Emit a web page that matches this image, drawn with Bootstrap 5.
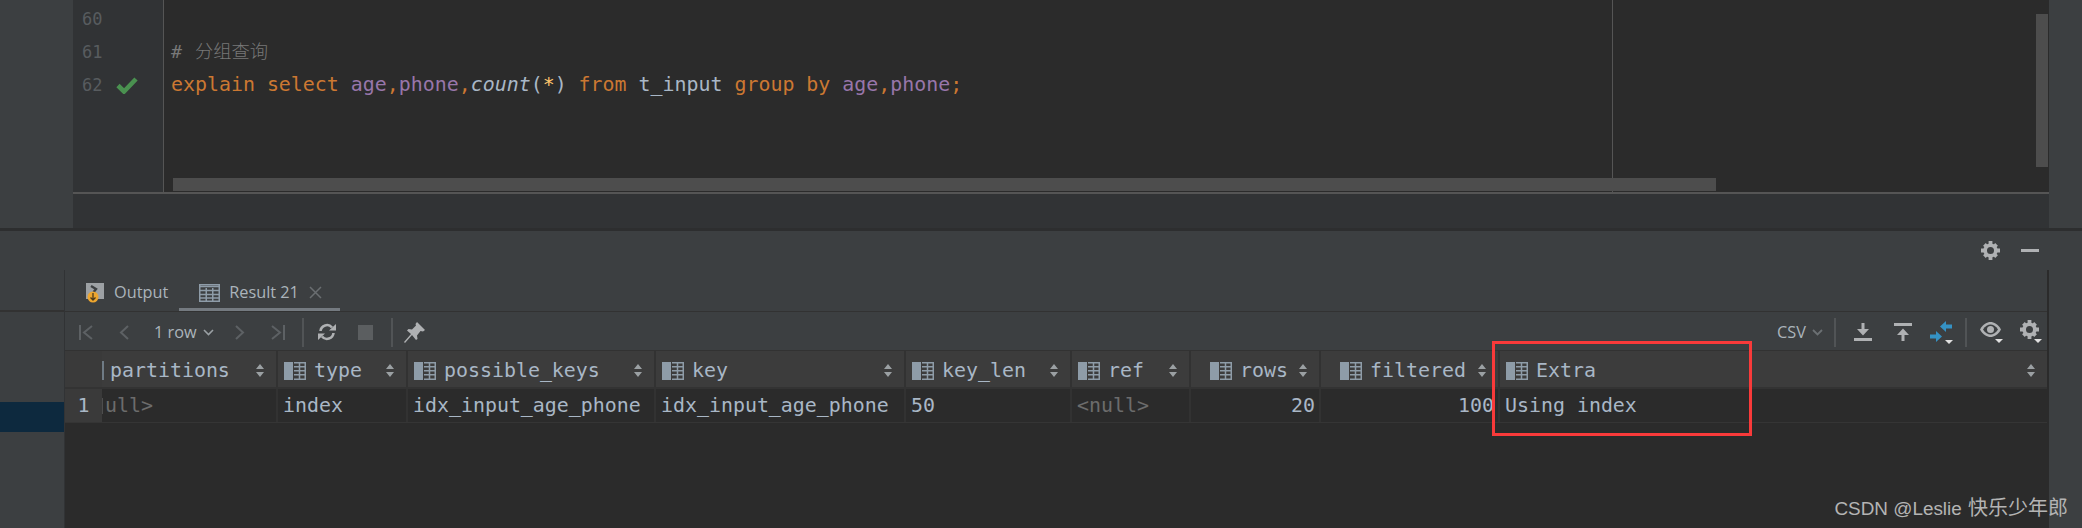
<!DOCTYPE html>
<html lang="en">
<head>
<meta charset="utf-8">
<title>Explain result</title>
<link href="https://cdn.jsdelivr.net/npm/bootstrap@5.3.0/dist/css/bootstrap.min.css" rel="stylesheet">
<style>
html,body{margin:0;height:528px;overflow:hidden}
body{position:relative;width:2082px;background:#3c3f41;color:#a9b7c6;font-family:"DejaVu Sans Mono","Liberation Mono",monospace}
.mono{font-family:"DejaVu Sans Mono","Liberation Mono",monospace;font-size:19.92px;letter-spacing:0}
.ui{font-family:"Open Sans","Liberation Sans",sans-serif;font-size:16.3px;color:#abb4bb}
.top-area{height:228px}
.stripe-l{width:73px;background:#3c3f41}
.stripe-r{width:33px;background:#3c3f41}
.editor-col{width:1976px}
.editor{height:192px;background:#2b2b2b;position:relative;overflow:hidden}
.gutter{width:91px;background:#313335;border-right:1px solid #555;padding-top:3px}
.g-line{height:33px;line-height:33px;padding-left:9px;font-size:17px;color:#585c5f}
.g-line svg{margin-left:14px}
.code{padding-top:2px;padding-left:7px}
.c-line{height:33px;line-height:33px;white-space:pre}
.kw{color:#cc7832}.col{color:#9876aa}.fn{color:#a9b7c6;font-style:italic}.star{color:#ffc66d}
.cmt{color:#787878;font-family:"DejaVu Sans Mono","Noto Sans CJK SC",monospace;font-size:18.3px;font-weight:300;word-spacing:2px}
.margin-line{position:absolute;left:1539px;top:0;bottom:0;width:1px;background:#555}
.sb-h{position:absolute;left:100px;top:178px;width:1543px;height:13px;background:#4d4d4d}
.sb-v{position:absolute;right:1px;top:14px;width:12px;height:153px;background:#4d4d4d}
.crumbs{height:36px;border-top:2px solid #555;background:#313335}
.split{height:3px;background:#2d2e2f}
.lower{height:297px}
.tw-head{height:39px;padding-right:43px}
.tw-head .gear-i{margin-right:21px}
.tw-body{height:258px}
.side{width:64px}
.side-a{height:42px;border-bottom:2px solid #323232}
.side-b{height:90px}
.side-sel{height:30px;background:#0d293e}
.panel{width:1985px;border-left:1px solid #313335;border-right:2px solid #2b2b2b;background:#2b2b2b}
.tabs{height:42px;background:#3c3f41;border-bottom:1px solid #323232;padding-left:21px}
.tab{height:41px;padding-top:4px}
.tab-a{position:relative}
.tab-a::after{content:"";position:absolute;left:-20px;right:-18px;bottom:0;height:3px;background:#747a80}
.lbl{margin-left:9px}
.tab-res{margin-left:31px}
.x-i{margin-left:10px}
.toolbar{height:38px;background:#3c3f41;padding:2px 4px 0 14px}
.sep{width:2px;height:29px;background:#515456}
.m6{margin-left:6px}.m11{margin-left:11px}.m12{margin-left:12px}.m13{margin-left:13px}.m14{margin-left:14px}.m16{margin-left:16px}.m17{margin-left:17px}.m18{margin-left:18px}.m21{margin-left:21px}.m22{margin-left:22px}.m26{margin-left:26px}
.lb-row{margin-left:25px}
.gridrow{display:grid;grid-template-columns:37px 176px 130px 248px 250px 166px 119px 130px 179px 1fr}
.ghead{height:39px;background:#3c3c3c;border-top:1px solid #323232;border-bottom:2px solid #333}
.ghead>div{border-right:2px solid #323232;height:36px;padding-left:6px;padding-top:3px;overflow:hidden}
.ghead>div:first-child{padding-left:0;border-right:0;background:#3a3a3a}
.ghead>div:last-child{border-right:0}
.ghead .cut{padding-left:0}
.cut-i{width:2px;height:19px;background:#6f7b85;margin-right:6px}
.ghead .rt{padding-left:19px}
.hname{margin-left:8px;line-height:33px}
.cut .hname{margin-left:0}
.srt{margin-left:auto;margin-right:12px;flex:none}
.gbody{height:34px;border-bottom:1px solid #353535;background:#2b2b2b}
.gbody>div{border-right:2px solid #323232;height:33px;line-height:33px;padding:0 5px;overflow:hidden;white-space:nowrap}
.gbody>div:first-child{background:#3a3a3a;border-right:0;text-align:center;padding:0}
.gbody>div:last-child{border-right:0}
.nul{color:#6c6c6c}
.gbody>.clipc{position:relative;padding-left:3px}
.gbody>.clipc::before{content:"";position:absolute;left:0;top:9px;width:1px;height:16px;background:#4d4d4d}
.rgt{text-align:right}
.gbody>.rgt{padding-right:4px}
.redbox{position:absolute;left:1492px;top:341px;width:260px;height:95px;border:3px solid #f93a3a}
.wm{position:absolute;right:14px;top:496px;font-family:"Liberation Sans","Noto Sans CJK SC",sans-serif;font-size:18.9px;line-height:24px;color:#b4b4b4;white-space:nowrap}
.wm-cjk{font-size:20px;margin-left:1px}
</style>
</head>
<body>
<svg width="0" height="0" class="d-block">
  <defs>
    <symbol id="colic" viewBox="0 0 22 18">
      <rect x="0" y="0" width="9" height="18" fill="#8e9ca8"/>
      <path d="M10 .75H22M10 4.75H22M10 8.75H22M10 12.75H22M10 17.25H22M15.5 0V18M21.25 0V18" stroke="#8e9ca8" stroke-width="1.5" fill="none"/>
    </symbol>
    <symbol id="sorti" viewBox="0 0 8 13">
      <path d="M4 0L8 5H0ZM4 13L0 8H8Z" fill="#9ba0a3"/>
    </symbol>
    <symbol id="geari" viewBox="0 0 20 20">
      <circle cx="10" cy="10" r="5.6" fill="none" stroke="#afb1b3" stroke-width="3.8"/>
      <path d="M8 0h4v4H8zM8 16h4v4H8zM0 8h4v4H0zM16 8h4v4h-4zM2.2 5l2.8-2.8 2.8 2.8L5 7.8zM12.2 15l2.8-2.8 2.8 2.8L15 17.8zM2.2 15L5 12.2 7.8 15 5 17.8zM12.2 5L15 2.2 17.800 5 15 7.8z" fill="#afb1b3"/>
    </symbol>
  </defs>
</svg>

<div class="top-area d-flex">
  <div class="stripe-l"></div>
  <div class="editor-col">
    <div class="editor d-flex mono">
      <div class="gutter flex-shrink-0">
        <div class="g-line">60</div>
        <div class="g-line">61</div>
        <div class="g-line d-flex align-items-center">62<svg width="22" height="17" viewBox="0 0 22 17"><path d="M2 8.500L8 14.500L20 2" fill="none" stroke="#4a9150" stroke-width="4.6"/></svg></div>
      </div>
      <div class="code flex-grow-1">
        <div class="c-line">&nbsp;</div>
        <div class="c-line"><span class="cmt"># 分组查询</span></div>
        <div class="c-line"><span class="kw">explain select </span><span class="col">age</span><span class="kw">,</span><span class="col">phone</span><span class="kw">,</span><span class="fn">count</span>(<span class="star">*</span>) <span class="kw">from </span>t_input <span class="kw">group by </span><span class="col">age</span><span class="kw">,</span><span class="col">phone</span><span class="kw">;</span></div>
      </div>
      <div class="margin-line"></div>
      <div class="sb-h"></div>
      <div class="sb-v"></div>
    </div>
    <div class="crumbs"></div>
  </div>
  <div class="stripe-r"></div>
</div>
<div class="split"></div>

<div class="lower d-flex flex-column">
  <div class="tw-head d-flex align-items-center justify-content-end">
    <svg class="gear-i" width="19" height="19"><use href="#geari"/></svg>
    <svg width="18" height="3"><rect width="18" height="3" fill="#afb1b3"/></svg>
  </div>
  <div class="tw-body d-flex">
    <div class="side flex-shrink-0">
      <div class="side-a"></div>
      <div class="side-b"></div>
      <div class="side-sel"></div>
    </div>
    <div class="panel d-flex flex-column">
      <div class="tabs d-flex align-items-center ui">
        <div class="tab d-flex align-items-center">
          <svg width="19" height="21" viewBox="0 0 19 21">
            <rect x="0" y="1" width="18" height="16" fill="#9da1a4"/>
            <path d="M5 4l5 3-2 2.500M8 9v5" fill="none" stroke="#3c3f41" stroke-width="2.400"/>
            <circle cx="7" cy="15" r="5.500" fill="#eda62f"/>
            <path d="M7 11v7M4.500 15.500L7 18l2.500-2.500" fill="none" stroke="#4a3a1c" stroke-width="1.300"/>
          </svg>
          <span class="lbl">Output</span>
        </div>
        <div class="tab tab-a tab-res d-flex align-items-center">
          <svg width="21" height="18" viewBox="0 0 21 18">
            <rect x=".75" y=".75" width="19.500" height="16.500" fill="none" stroke="#8e9ca8" stroke-width="1.500"/>
            <path d="M0 2.500H21M0 6.500H21M0 10.500H21M0 14H21" stroke="#8e9ca8" stroke-width="1.500"/>
            <path d="M7.250 4V18M13.750 4V18" stroke="#8e9ca8" stroke-width="1.500"/>
          </svg>
          <span class="lbl">Result 21</span>
          <svg class="x-i" width="13" height="13" viewBox="0 0 13 13"><path d="M1 1L12 12M12 1L1 12" stroke="#6a6e71" stroke-width="1.500"/></svg>
        </div>
      </div>

      <div class="toolbar d-flex align-items-center ui">
        <svg width="14" height="15" viewBox="0 0 14 15"><path d="M1 0V15M13 1L5 7.500L13 14" fill="none" stroke="#5d6164" stroke-width="2"/></svg>
        <svg class="m26" width="10" height="15" viewBox="0 0 10 15"><path d="M9 1L2 7.500L9 14" fill="none" stroke="#5d6164" stroke-width="2"/></svg>
        <span class="lb-row">1 row</span>
        <svg class="m6" width="11" height="7" viewBox="0 0 11 7"><path d="M1 1L5.500 5.500L10 1" fill="none" stroke="#9aa0a4" stroke-width="1.600"/></svg>
        <svg class="m21" width="10" height="15" viewBox="0 0 10 15"><path d="M1 1L8 7.500L1 14" fill="none" stroke="#5d6164" stroke-width="2"/></svg>
        <svg class="m26" width="14" height="15" viewBox="0 0 14 15"><path d="M13 0V15M1 1L9 7.500L1 14" fill="none" stroke="#5d6164" stroke-width="2"/></svg>
        <div class="sep m17"></div>
        <svg class="m14" width="18" height="18" viewBox="0 0 18 18">
          <path d="M2.500 8A6.500 6.500 0 0 1 14 4.500M15.500 10A6.500 6.500 0 0 1 4 13.500" fill="none" stroke="#afb1b3" stroke-width="2.600"/>
          <path d="M11 7.500H18V1ZM7 10.500H0V17Z" fill="#afb1b3"/>
        </svg>
        <svg class="m22" width="15" height="15"><rect width="15" height="15" fill="#5b5e60"/></svg>
        <div class="sep m18"></div>
        <svg class="m11" width="21" height="21" viewBox="0 0 21 21"><path d="M13 0L21 8L19 9.500L16.500 9L13 13.500L13.500 17L12 18L8 13L1 21L0 20L7 12L3 8.500L4.500 7L8 7.500L12 3.500L11.500 2Z" fill="#afb1b3"/></svg>

        <span class="ms-auto">CSV</span>
        <svg class="m6" width="11" height="7" viewBox="0 0 11 7"><path d="M1 1L5.500 5.500L10 1" fill="none" stroke="#6b7073" stroke-width="1.800"/></svg>
        <div class="sep m11"></div>
        <svg class="m18" width="18" height="18" viewBox="0 0 18 18"><path d="M0 15H18V18H0ZM7.500 0H10.500V6H15L9 12.500L3 6H7.500Z" fill="#afb1b3"/></svg>
        <svg class="m22" width="18" height="18" viewBox="0 0 18 18"><path d="M0 0H18V3H0ZM9 5.500L15 12H10.500V18H7.500V12H3Z" fill="#afb1b3"/></svg>
        <svg class="m18" width="23" height="23" viewBox="0 0 23 23">
          <path d="M10 5.500L16 0V3.500H22V7.500H16V11ZM12 15.500L6 21V17.500H0V13.500H6V10Z" fill="#3592c4"/>
          <path d="M15 19H23L19 23Z" fill="#e0e0e0"/>
        </svg>
        <div class="sep m12"></div>
        <svg class="m13" width="24" height="22" viewBox="0 0 24 22">
          <path d="M0 8.500C3 3 7 1 10.500 1S18 3 21 8.500C18 14 14 16 10.500 16S3 14 0 8.500Z" fill="#afb1b3"/>
          <path d="M3 8.500C5 5 8 3.500 10.500 3.500S16 5 18 8.500C16 12 13 13.500 10.500 13.500S5 12 3 8.500Z" fill="#3c3f41"/>
          <circle cx="10.500" cy="8.500" r="3.500" fill="#afb1b3"/>
          <path d="M15 18H23L19 22Z" fill="#e0e0e0"/>
        </svg>
        <svg class="m16" width="23" height="24" viewBox="0 0 23 24">
          <use href="#geari" width="19" height="19"/>
          <path d="M14 19H22L18 23Z" fill="#e0e0e0"/>
        </svg>
      </div>

      <div class="gridrow ghead mono">
        <div></div>
        <div class="cut d-flex align-items-center"><span class="cut-i"></span><span class="hname">partitions</span><svg class="srt" width="8" height="13"><use href="#sorti"/></svg></div>
        <div class="d-flex align-items-center"><svg width="22" height="18"><use href="#colic"/></svg><span class="hname">type</span><svg class="srt" width="8" height="13"><use href="#sorti"/></svg></div>
        <div class="d-flex align-items-center"><svg width="22" height="18"><use href="#colic"/></svg><span class="hname">possible_keys</span><svg class="srt" width="8" height="13"><use href="#sorti"/></svg></div>
        <div class="d-flex align-items-center"><svg width="22" height="18"><use href="#colic"/></svg><span class="hname">key</span><svg class="srt" width="8" height="13"><use href="#sorti"/></svg></div>
        <div class="d-flex align-items-center"><svg width="22" height="18"><use href="#colic"/></svg><span class="hname">key_len</span><svg class="srt" width="8" height="13"><use href="#sorti"/></svg></div>
        <div class="d-flex align-items-center"><svg width="22" height="18"><use href="#colic"/></svg><span class="hname">ref</span><svg class="srt" width="8" height="13"><use href="#sorti"/></svg></div>
        <div class="rt d-flex align-items-center"><svg width="22" height="18"><use href="#colic"/></svg><span class="hname">rows</span><svg class="srt" width="8" height="13"><use href="#sorti"/></svg></div>
        <div class="rt d-flex align-items-center"><svg width="22" height="18"><use href="#colic"/></svg><span class="hname">filtered</span><svg class="srt" width="8" height="13"><use href="#sorti"/></svg></div>
        <div class="d-flex align-items-center"><svg width="22" height="18"><use href="#colic"/></svg><span class="hname">Extra</span><svg class="srt" width="8" height="13"><use href="#sorti"/></svg></div>
      </div>
      <div class="gridrow gbody mono">
        <div>1</div>
        <div class="clipc"><span class="nul">ull&gt;</span></div>
        <div>index</div>
        <div>idx_input_age_phone</div>
        <div>idx_input_age_phone</div>
        <div>50</div>
        <div class="nul">&lt;null&gt;</div>
        <div class="rgt">20</div>
        <div class="rgt">100</div>
        <div>Using index</div>
      </div>
    </div>
  </div>
</div>

<div class="redbox"></div>
<div class="wm">CSDN @Leslie <span class="wm-cjk">快乐少年郎</span></div>
<script src="https://cdn.jsdelivr.net/npm/bootstrap@5.3.0/dist/js/bootstrap.bundle.min.js"></script>
</body>
</html>
